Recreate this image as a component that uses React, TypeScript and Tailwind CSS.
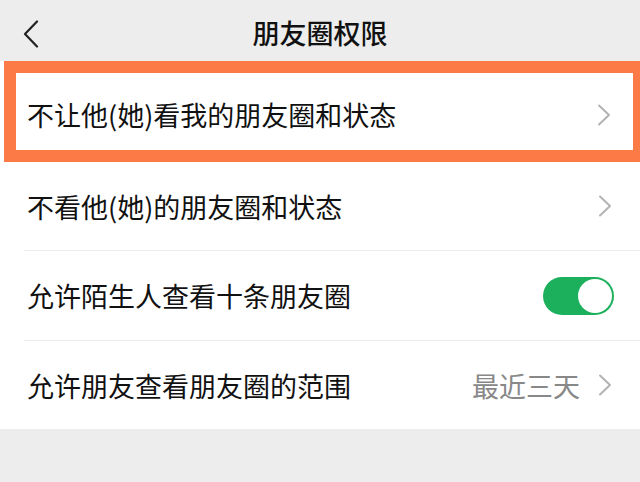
import React from 'react';

const font = { fontFamily: '"Noto Sans CJK SC", "Noto Sans", sans-serif' };

function Chevron({ color = '#b3b3b3' }: { color?: string }) {
  return (
    <svg width="14" height="22" viewBox="0 0 14 22" fill="none">
      <path d="M2 1.5 L12 11 L2 20.5" stroke={color} strokeWidth="2" strokeLinecap="round" strokeLinejoin="round" />
    </svg>
  );
}

function Toggle() {
  return (
    <div className="relative w-[71px] h-[38px] rounded-full bg-[#1cb05d]">
      <div className="absolute right-[2px] top-[2px] w-[34px] h-[34px] rounded-full bg-white" />
    </div>
  );
}

export default function App() {
  return (
    <div className="w-[640px] h-[482px] bg-[#ededed] overflow-hidden" style={font}>
      <div className="relative h-[61px] flex items-center justify-center">
        <svg className="absolute left-[23px] top-[20px]" width="16" height="28" viewBox="0 0 16 28" fill="none">
          <path d="M14 1.5 L2 14 L14 26.5" stroke="#222" strokeWidth="2.2" strokeLinecap="round" strokeLinejoin="round" />
        </svg>
        <span className="text-[27px] leading-none font-medium text-[#111] mt-[4px]">朋友圈权限</span>
      </div>

      <div className="bg-white">
        <div className="ml-[4px] h-[101px] border-y-[12px] border-l-[12px] border-r-[7px] border-[#fc7a46] flex items-center justify-between pl-[11px] pr-[22px] pt-[6px]">
          <span className="text-[27px] leading-none text-[#111]">不让他(她)看我的朋友圈和状态</span>
          <Chevron />
        </div>

        <div className="h-[88px] flex items-center justify-between pl-[27px] pr-[28px]">
          <span className="text-[27px] leading-none text-[#111]">不看他(她)的朋友圈和状态</span>
          <Chevron />
        </div>
        <div className="ml-[24px] h-px bg-[#ececec]" />

        <div className="h-[89px] flex items-center justify-between pl-[27px] pr-[26px]">
          <span className="text-[27px] leading-none text-[#111]">允许陌生人查看十条朋友圈</span>
          <Toggle />
        </div>
        <div className="ml-[24px] h-px bg-[#ececec]" />

        <div className="h-[88px] flex items-center justify-between pl-[27px] pr-[28px]">
          <span className="text-[27px] leading-none text-[#111]">允许朋友查看朋友圈的范围</span>
          <div className="flex items-center gap-[18px]">
            <span className="text-[27px] leading-none text-[#888]">最近三天</span>
            <Chevron />
          </div>
        </div>
      </div>
    </div>
  );
}
